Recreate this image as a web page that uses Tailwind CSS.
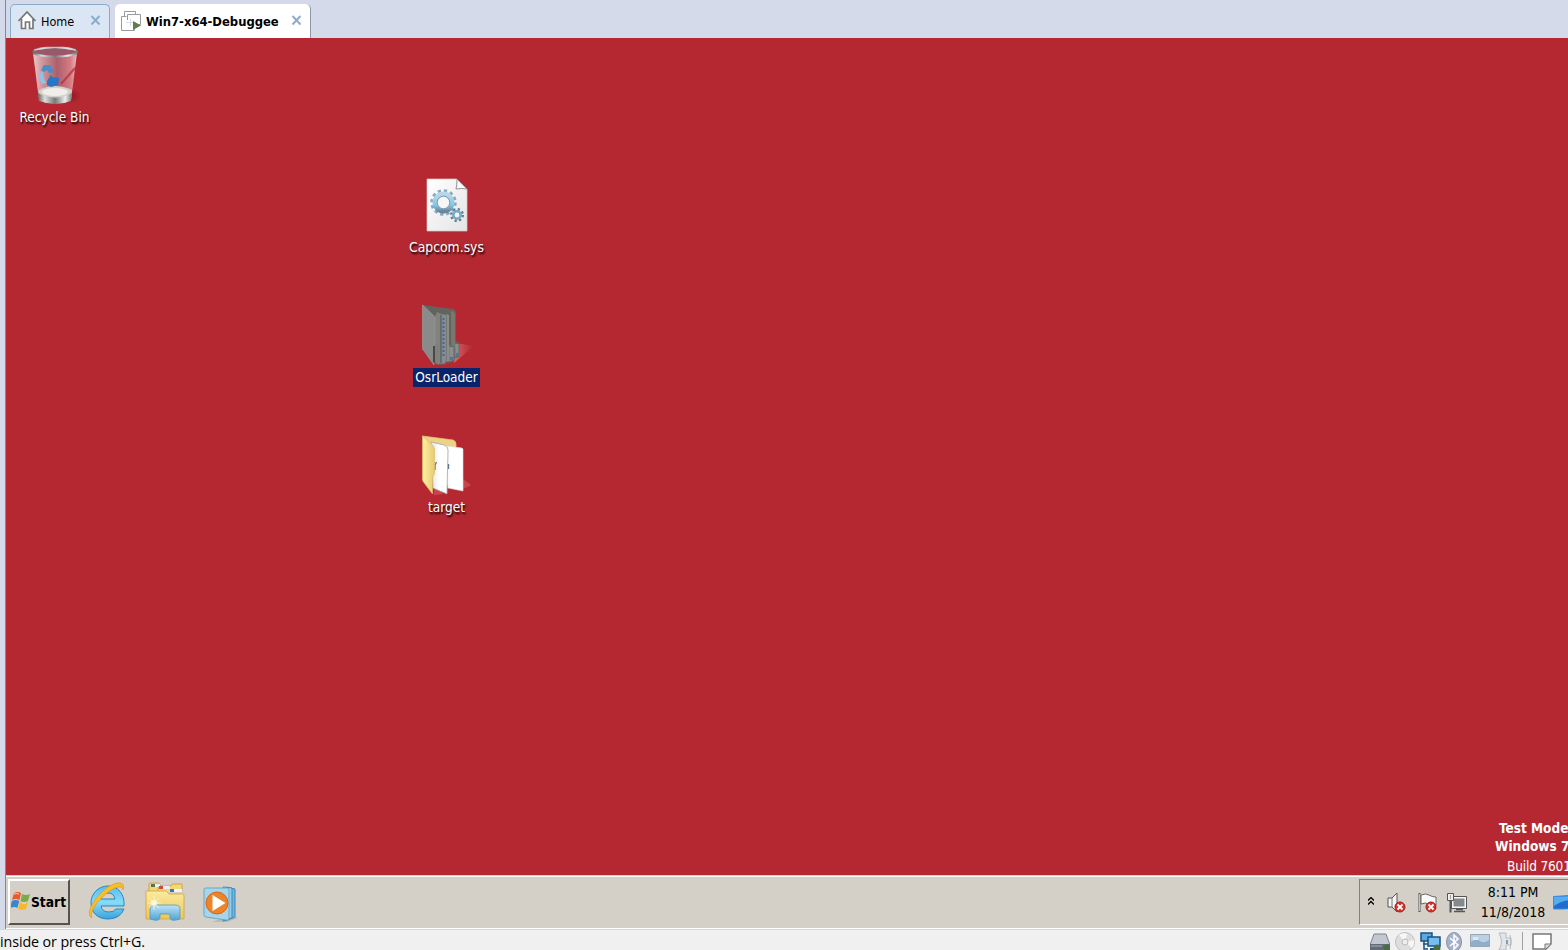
<!DOCTYPE html>
<html lang="en">
<head>
<meta charset="utf-8">
<title>Win7-x64-Debuggee</title>
<script src="https://cdn.jsdelivr.net/npm/@tailwindcss/browser@4"></script>
</head>
<body class="w-[1568px] h-[950px] overflow-hidden bg-[#f0f0f0] flex flex-col font-['DejaVu_Sans_Condensed','DejaVu_Sans',sans-serif] text-black">
<div class="h-[929px] shrink-0 flex bg-[#d5daeb]">
  <div class="w-[5px] shrink-0"></div>
  <div class="flex-1 min-w-0 flex flex-col border-l border-[#858792]">
    <!-- tabs -->
    <div class="h-[38px] shrink-0 flex items-end pl-1 bg-[#d5daeb]">
      <div class="w-[100px] h-[34px] flex items-center border border-b-0 border-[#89abcc] rounded-t-[5px] bg-[#dae6f4] pl-[6px]">
        <svg class="w-5 h-5 shrink-0 -mt-[3px]" viewBox="0 0 20 20" fill="none"><path d="M4 9.5V18.500H16V9.500L10 3.500Z" fill="#fff"/><path d="M1.500 11 10 2l8.500 9M4.500 9v9.500h4V12h4v6.500h3.500V9" stroke="#777" stroke-width="1.700"/></svg>
        <span class="ml-1 text-[12.500px] leading-4 w-[34px] whitespace-nowrap">Home</span>
        <svg class="ml-[15px] w-[11px] h-[11px] shrink-0 -mt-[2px]" viewBox="0 0 11 11"><path d="M1.500 1 9.500 9.500M9.500 1 1.500 9.500" stroke="#8badca" stroke-width="2"/></svg>
      </div>
      <div class="ml-[5px] w-[196px] h-[34px] flex items-center border-r border-[#8f98ab] rounded-t-[5px] bg-white pl-[6px]">
        <svg class="w-[21px] h-[22px] shrink-0" viewBox="0 0 21 22" fill="none"><g stroke="#9a9a9a"><path d="M3.500 6.500V1.500h11V4M5.500 6.500H.500v14h13V17"/><path d="M6.500 10V4.500h13v10h-2"/></g><path d="M9.500 8.500v8M5 12.500h10" stroke="#d7e0ea"/><path d="M12 11v9l8-4.500z" fill="#5e7e50"/></svg>
        <span class="ml-1 mt-px text-[12.900px] leading-4 font-bold w-[133px] whitespace-nowrap">Win7-x64-Debuggee</span>
        <svg class="ml-[12px] w-[11px] h-[11px] shrink-0 -mt-px" viewBox="0 0 11 11"><path d="M1.500 1 9.500 9.500M9.500 1 1.500 9.500" stroke="#8badca" stroke-width="2"/></svg>
      </div>
    </div>
    <!-- desktop -->
    <div class="relative h-[837px] shrink-0 overflow-hidden bg-[#b62831] text-white text-[13.500px] leading-[18px] whitespace-nowrap">
      <div class="absolute left-0 top-[5px] w-[97px] flex flex-col items-center">
        <svg class="w-[50px] h-[65px]" viewBox="0 0 50 65">
          <defs>
            <linearGradient id="bm"><stop stop-color="#666"/><stop offset=".2" stop-color="#ddd"/><stop offset=".5" stop-color="#777"/><stop offset=".8" stop-color="#eee"/><stop offset="1" stop-color="#777"/></linearGradient>
            <linearGradient id="bg"><stop stop-color="#eedada" stop-opacity=".9"/><stop offset=".2" stop-color="#d3a4a9" stop-opacity=".9"/><stop offset=".55" stop-color="#aa6574" stop-opacity=".9"/><stop offset=".85" stop-color="#d9868b" stop-opacity=".9"/><stop offset="1" stop-color="#f1caca" stop-opacity=".9"/></linearGradient>
            <radialGradient id="sh"><stop stop-color="#700a12" stop-opacity=".6"/><stop offset="1" stop-color="#700a12" stop-opacity="0"/></radialGradient>
          </defs>
          <ellipse cx="39" cy="53" rx="13" ry="8" fill="url(#sh)"/>
          <path d="M3 10 9 57q15 7 32 0L47 10Z" fill="url(#bg)"/>
          <path d="M9 47q16-8 33 0l-1 9q-15 6-32 0Z" fill="#d2d0ca"/>
          <ellipse cx="25" cy="49" rx="13" ry="4" fill="#f0eee8"/>
          <path d="M8 50q17 9 34 0l-1 8q-15 6-32 0Z" fill="url(#bm)"/>
          <path d="M31 41 45 25" stroke="#b83445" stroke-width="2" opacity=".8"/>
          <path d="m11 27 3-5 6 0 4 7-5 1-2-3-3 2z" fill="#478fc8"/><path d="m9 30 4-1 1 6 2 5-4 1-3-6z" fill="#8fc2e6"/><path d="m17 38 4-6 1 2 7 1-1 7-7 2-4-2z" fill="#2478c5"/>
          <ellipse cx="25" cy="9" rx="22" ry="4.500" fill="#9b5868" stroke="url(#bm)" stroke-width="2"/>
          <path d="M4 7q21-5 42 0" stroke="#e0e0e0" stroke-width=".8" fill="none"/>
        </svg>
        <span class="[text-shadow:1px_2px_2px_#000]">Recycle Bin</span>
      </div>
      <div class="absolute left-[392px] top-[135px] w-[97px] flex flex-col items-center">
        <svg class="w-[50px] h-[65px]" viewBox="0 0 50 65">
          <defs><linearGradient id="pg" x2="1" y2="1"><stop stop-color="#fff"/><stop offset="1" stop-color="#e4e4e4"/></linearGradient><linearGradient id="gr" x2="0" y2="1"><stop stop-color="#bad7e9"/><stop offset=".65" stop-color="#83c9e8"/><stop offset="1" stop-color="#67859c"/></linearGradient></defs>
          <path d="M5 6h30l10 10v42H5z" fill="url(#pg)" stroke="#d9cccc" stroke-width=".7"/>
          <path d="M35 6q0 6-1 10 6-1 11 0z" fill="#f7f7f7" stroke="#888" stroke-width=".9"/>
          <circle cx="21.500" cy="29.500" r="11.500" fill="none" stroke="#86a9c0" stroke-width="3.500" stroke-dasharray="3.200 2.820"/>
          <circle cx="21.500" cy="29.500" r="8.700" fill="none" stroke="url(#gr)" stroke-width="4.500"/><circle cx="21.500" cy="29.500" r="6.300" fill="#f7f7f7" stroke="#7294aa"/>
          <circle cx="35" cy="42" r="5.500" fill="none" stroke="#607c95" stroke-width="3" stroke-dasharray="2.100 2.220"/>
          <circle cx="35" cy="42" r="3.700" fill="#f4f4f4" stroke="#77abc6" stroke-width="2.600"/>
        </svg>
        <span class="text-[13.800px]/[18px] [text-shadow:1px_2px_2px_#000]">Capcom.sys</span>
      </div>
      <div class="absolute left-[392px] top-[265px] w-[97px] flex flex-col items-center">
        <svg class="w-[58px] h-[65px]" viewBox="0 0 56 65">
          <defs><linearGradient id="fs"><stop stop-color="#e78b8d" stop-opacity=".7"/><stop offset="1" stop-color="#df5b63" stop-opacity="0"/></linearGradient></defs>
          <path d="m36 40 19 3-20 17Z" fill="url(#fs)"/>
          <path d="M3.500 2 34 6q3 1 3 4v28l3.500 2v14l-5 1v3l-5 2-3-1v2l-7 1Z" fill="#63645f"/>
          <path d="M15 16 18 9l4 2v50l-5-1Z" fill="#7f837c"/>
          <path d="m22 11 5 1v46l-2 3-3-1Z" fill="#828b98"/>
          <path d="M24.500 15v40" stroke="#4c6694" stroke-width="2" stroke-dasharray="2 2"/>
          <path d="m27.500 11 3 1v46l-3 1Z" fill="#8b8e86"/>
          <path d="M31 12q0-4 2-4t3 3v29l3.500 2v11l-4 1V44l-4-2Z" fill="#77796f"/>
          <path d="M31 10v32M22 12v48" stroke="#4d4e4c" stroke-width=".9"/>
          <path d="M30.500 44h4v13l-4 1ZM36.500 41h3v12h-3Z" fill="#8a8e8e"/>
          <path d="M31 54h3v3h-3zM37 50h2.500v3H37z" fill="#4376b2"/>
          <path d="M3.500 2 13 11q3 2 3 5v27l-1 19L5 48q-1.500-1-1.500-3Z" fill="#888b89" stroke="#989996" stroke-width=".7"/>
          <path d="M14 43h2v17l-2-1Z" fill="#4b4845"/>
          <path d="M16 42h2l2 5v15l-4-2Z" fill="#7e817b"/>
        </svg>
        <span class="bg-[#0a246a] px-[2px] pb-px">OsrLoader</span>
      </div>
      <div class="absolute left-[392px] top-[395px] w-[97px] flex flex-col items-center">
        <svg class="w-[58px] h-[65px]" viewBox="0 0 56 65">
          <defs><linearGradient id="fy"><stop stop-color="#fff0a3"/><stop offset="1" stop-color="#e7ca6f"/></linearGradient><linearGradient id="fw"><stop stop-color="#e5e5ea"/><stop offset=".5" stop-color="#fff"/></linearGradient></defs>
          <path d="m44 46 8 6-8 4ZM15 48l9 13-9 1Z" fill="#df6870" opacity=".45"/>
          <path d="M3.500 3 34 7q3 1 3 4v33L14 49Z" fill="#ecd283" stroke="#e3c983" stroke-width=".7"/>
          <path d="m20 12 23 3 1 1v42l-15-3Z" fill="url(#fw)" stroke="#ddd" stroke-width=".6"/>
          <path d="m12 9 13 3q4 1 4 5l-1 44-14-6Z" fill="url(#fw)" stroke="#a5a5ac" stroke-width=".8"/>
          <path d="M29.500 31v5M17.500 29l-1.500 3v5" stroke="#64748a" stroke-width="1.300" fill="none"/>
          <path d="m3.500 3 10 9q2 2 2 5v24l-2 3v17L4.500 49q-1-1-1-3Z" fill="url(#fy)" stroke="#d9bd69" stroke-width=".7"/>
        </svg>
        <span class="[text-shadow:1px_2px_2px_#000]">target</span>
      </div>
      <div class="absolute left-[1489px] top-[781px] font-bold text-[13.500px]">
        <div class="ml-1">Test Mode</div>
        <div>Windows 7</div>
        <div class="ml-3 mt-[2px] font-normal tracking-[-0.150px]">Build 7601</div>
      </div>
    </div>
    <!-- taskbar -->
    <div class="h-[54px] shrink-0 flex bg-[#d4d0c8] border-t border-[#d4d0c8]">
      <div class="flex-1 min-w-0 flex border-t border-b border-white pt-[2px] pl-[2px]">
        <div class="w-[62px] h-[46px] shrink-0 flex items-center border-2 border-t-white border-l-white border-r-[#55534f] border-b-[#55534f] pl-px">
          <svg class="w-[20px] h-[20px] shrink-0 -mt-[2px]" viewBox="0 0 20 20"><path d="M3 2q4-2 7 0L8.500 9q-4-2-7.500 0Z" fill="#e8592b"/><path d="M11 3q4 2 8 0l-2 7q-4 2-7.500 0Z" fill="#7cab4c"/><path d="M.800 10q4-2 7.500 0l-2 7q-3-2-7 0Z" fill="#3a86cf"/><path d="M9 11q4 2 8 0l-2 7q-4 2-8 0Z" fill="#f6b92e"/><path d="M3 3q3-1 5 0M11 12q2 1 4 0" stroke="#fbd3a0" fill="none"/></svg>
          <span class="text-[13.700px] font-bold leading-4">Start</span>
        </div>
        <svg class="ml-[17px] w-[40px] h-[42px] shrink-0 mt-[2px]" viewBox="0 0 40 42">
          <defs><linearGradient id="ie" x2="0" y2="1"><stop stop-color="#5dbcea"/><stop offset=".5" stop-color="#84dcfb"/><stop offset="1" stop-color="#3ba2dc"/></linearGradient></defs>
          <path d="M37 25H14q1 6 8 6 5 0 7-3h8q-4 10-16 10C10 38 4 31 4 22S11 5 21 5s17 8 16 20ZM14 18h14q-1-6-7-6t-7 6Z" fill="url(#ie)" stroke="#2788c2" stroke-width="1"/>
          <path d="M5 37C-2 33 6 19 17 9 28 0 39-1 36 9 36 4 29 5 20 12 9 21 2 32 5 37Z" fill="#f8bd2c" stroke="#dd991c" stroke-width=".7"/>
        </svg>
        <svg class="ml-[17px] w-[42px] h-[42px] shrink-0 mt-[3px]" viewBox="0 0 42 42">
          <defs><linearGradient id="ex" x2="0" y2="1"><stop stop-color="#fbeaa0"/><stop offset="1" stop-color="#edc754"/></linearGradient><linearGradient id="eb" x2="0" y2="1"><stop stop-color="#bfe3f5"/><stop offset="1" stop-color="#4fa3d6"/></linearGradient></defs>
          <path d="M5 9V2q0-1 1-1h9l2 3h9v6" fill="#f3d675" stroke="#c99c35" stroke-width=".8"/><path d="M14 10V5h12l2-3h10v8" fill="#f3d778" stroke="#c99c35" stroke-width=".8"/>
          <path d="M7 2h9v3H7z" fill="#eee"/><path d="M7 2h4v3H7z" fill="#537748"/><path d="M15 4h11v3H15z" fill="#eee"/><path d="M15 4h4v3h-4z" fill="#c84c3d"/>
          <path d="M2 9h20l3 3h14q1 0 1 2v23H2Z" fill="url(#ex)" stroke="#d2a33c" stroke-width=".8"/>
          <path d="M26 7h12v3H26z" fill="#f4f4f4"/><path d="M26 7h4v3h-4z" fill="#287fbd"/>
          <path d="M6 37V27q0-4 4-4h21q5 0 5 4v10q-9 3-10-1v-4H16v4q-1 4-10 1Z" fill="url(#eb)" stroke="#4b9bc7" stroke-width=".8"/>
          <path d="M10 14v14M3 21h14M5 16l10 10m0-10L5 26" stroke="#fffbe1" stroke-width=".8" opacity=".8"/><circle cx="10" cy="21" r="3" fill="#fffce9" opacity=".8"/>
        </svg>
        <svg class="ml-[17px] w-[36px] h-[38px] shrink-0 mt-[7px]" viewBox="0 0 36 38">
          <path d="m27 29 8 3-11 4H9Z" fill="#777" opacity=".25"/>
          <path d="m23 1 9 2v28l-10 4Z" fill="#73b6dc" stroke="#3789bd"/>
          <path d="m20 1 9 1v30l-9 3Z" fill="#9bcce6" stroke="#3789bd"/>
          <path d="M2 2h22q2 0 2 2v28q0 3-3 2L3 31q-2 0-2-2V4q0-2 1-2Z" fill="#a8d4eb" stroke="#66a9cb"/>
          <circle cx="14" cy="17" r="11" fill="#ed8429" stroke="#d86711"/><path d="m9.500 9 13 8-13 8Z" fill="#fff"/>
        </svg>
        <div class="flex-1"></div>
        <div class="w-[209px] h-[46px] shrink-0 flex items-center border-l border-t border-[#808080] border-b border-b-white">
          <svg class="ml-2 w-[6px] h-[8px] shrink-0 -mt-[3px]" viewBox="0 0 6 8"><path d="m0 3.500 3-3 3 3M0 7.500l3-3 3 3" stroke="#000" stroke-width="1.300" fill="none"/></svg>
          <svg class="ml-[13px] w-[20px] h-[22px] shrink-0 mt-px" viewBox="0 0 20 22"><path d="M1 6h4l5-5v19l-5-5H1Z" fill="#f5f5f5" stroke="#555"/><path d="M5 6v9" stroke="#777"/><circle cx="13" cy="15" r="5" fill="#d8332a" stroke="#a51d19"/><path d="m10.500 12.500 5 5m0-5-5 5" stroke="#fff" stroke-width="1.800"/></svg>
          <svg class="ml-[11px] w-[20px] h-[22px] shrink-0 mt-px" viewBox="0 0 20 22"><path d="M3 3q5-2 8 0t7 2v8q-4 1-7-1t-8 0Z" fill="#fafafa" stroke="#666"/><path d="M1.500 1v19" stroke="#555" stroke-width="2"/><path d="M1.500 2v17" stroke="#ddd" stroke-width=".8"/><circle cx="13" cy="15" r="5" fill="#d8332a" stroke="#a51d19"/><path d="m10.500 12.500 5 5m0-5-5 5" stroke="#fff" stroke-width="1.800"/></svg>
          <svg class="ml-[8px] w-[22px] h-[22px] shrink-0 mt-px" viewBox="0 0 22 22"><path d="M5.500 4.500h15v12h-15z" fill="#f6f6f6" stroke="#555"/><path d="M7.500 6.500h11v8h-11z" fill="#85898a"/><path d="M10 17.500h7M8 19.500h11" stroke="#555" stroke-width="1.500"/><path d="M4.500 8v12.500" stroke="#555" stroke-width="2"/><path d="M1.500 1.500h6v7h-6z" fill="#eee" stroke="#555"/><path d="M4.500 3v4" stroke="#999"/></svg>
          <div class="ml-[11px] w-[68px] shrink-0 text-center text-[14px] leading-5 whitespace-nowrap">8:11 PM<br>11/8/2018</div>
          <svg class="ml-[6px] w-[17px] h-[18px] shrink-0 mt-[3px]" viewBox="0 0 17 18"><path d="m.500 1.500 16.500-1V14H.500Z" fill="#206dcb" stroke="#3a8de0"/><path d="m1 2 16-1v4Q8 6 1 11Z" fill="#56acf0"/><path d="M12 15.500h5" stroke="#bdd5eb" stroke-width="2" fill="none"/></svg>
        </div>
      </div>
    </div>
  </div>
</div>
<!-- status bar -->
<div class="h-[21px] shrink-0 flex border-t border-[#d7d7d7] overflow-hidden">
  <span class="font-['Open_Sans','Noto_Sans',sans-serif] text-[14.300px] tracking-[-0.100px] leading-[18px] mt-[3px] whitespace-nowrap flex-1">inside or press Ctrl+G.</span>
  <div class="flex items-start pt-[2px] w-[198px]">
    <svg class="w-[20px] h-[20px] shrink-0" viewBox="0 0 20 20"><path d="M4 2h12l4 11H0Z" fill="#c2c8cf" stroke="#7d838b"/><path d="M0 12h20v7H0Z" fill="#626c77"/><path d="M1 14h11" stroke="#a9b1ba"/><circle cx="17" cy="16" r="3.500" fill="#4d6c40"/></svg>
    <svg class="ml-[5px] w-[20px] h-[20px] shrink-0" viewBox="0 0 20 20"><circle cx="10" cy="10" r="9.500" fill="#dedede" stroke="#bfbfbf"/><path d="M10 10 4 3q4-3 8-1ZM10 10l7 6q3-4 2-8Z" fill="#f7f7f7"/><circle cx="10" cy="10" r="3" fill="#eee" stroke="#bbb"/></svg>
    <svg class="ml-[5px] w-[21px] h-[20px] shrink-0" viewBox="0 0 21 20"><path d="M1 1h11v8H1Z" fill="#58aae3" stroke="#1b527f" stroke-width="1.500"/><path d="M4 9v8h4M3 12h6" stroke="#1b527f" stroke-width="1.500" fill="none"/><path d="M8 5h12v9H8Z" fill="#76bdf0" stroke="#1b527f" stroke-width="1.500"/><path d="M10 17h8" stroke="#1b527f" stroke-width="2"/><circle cx="17" cy="16" r="3.500" fill="#4d6c40"/></svg>
    <svg class="ml-[5px] w-[17px] h-[20px] shrink-0" viewBox="0 0 17 20"><ellipse cx="8" cy="10" rx="7.500" ry="9.500" fill="#a5b1c9" stroke="#8593ae"/><path d="m4 6 8 7-4 4V3l4 4-8 7" fill="none" stroke="#fff" stroke-width="1.500"/></svg>
    <svg class="ml-[7px] w-[20px] h-[18px] shrink-0" viewBox="0 0 20 18"><path d="M.500 2.500h19v12H.500Z" fill="#b9d0e5" stroke="#9aa6b2"/><path d="M1 10q5-4 9-1t9-1v6H1Z" fill="#8faecd"/><path d="M3 5h5v3H3Z" fill="#eee6d4"/></svg>
    <svg class="ml-[8px] w-[15px] h-[20px] shrink-0" viewBox="0 0 15 20"><path d="M1 1h7v5h5v7H8v5H1q5-8 0-17Z" fill="#e3e6e8" stroke="#b4b9be"/><path d="M8 8h2v4H8Z" fill="#8e99a3"/><path d="M12 3q2 7 0 14" stroke="#b4b9be" fill="none"/></svg>
    <div class="ml-[9px] w-px h-5 bg-[#a0a0a0]"></div>
    <svg class="ml-[9px] mt-[1px] w-[20px] h-[19px] shrink-0" viewBox="0 0 20 19"><path d="M1 1h18v10l-5 5H1Z" fill="#fff" stroke="#777" stroke-width="1.500"/><path d="M13 16v-5h6" fill="#ddd" stroke="#777"/></svg>
  </div>
</div>
</body>
</html>
